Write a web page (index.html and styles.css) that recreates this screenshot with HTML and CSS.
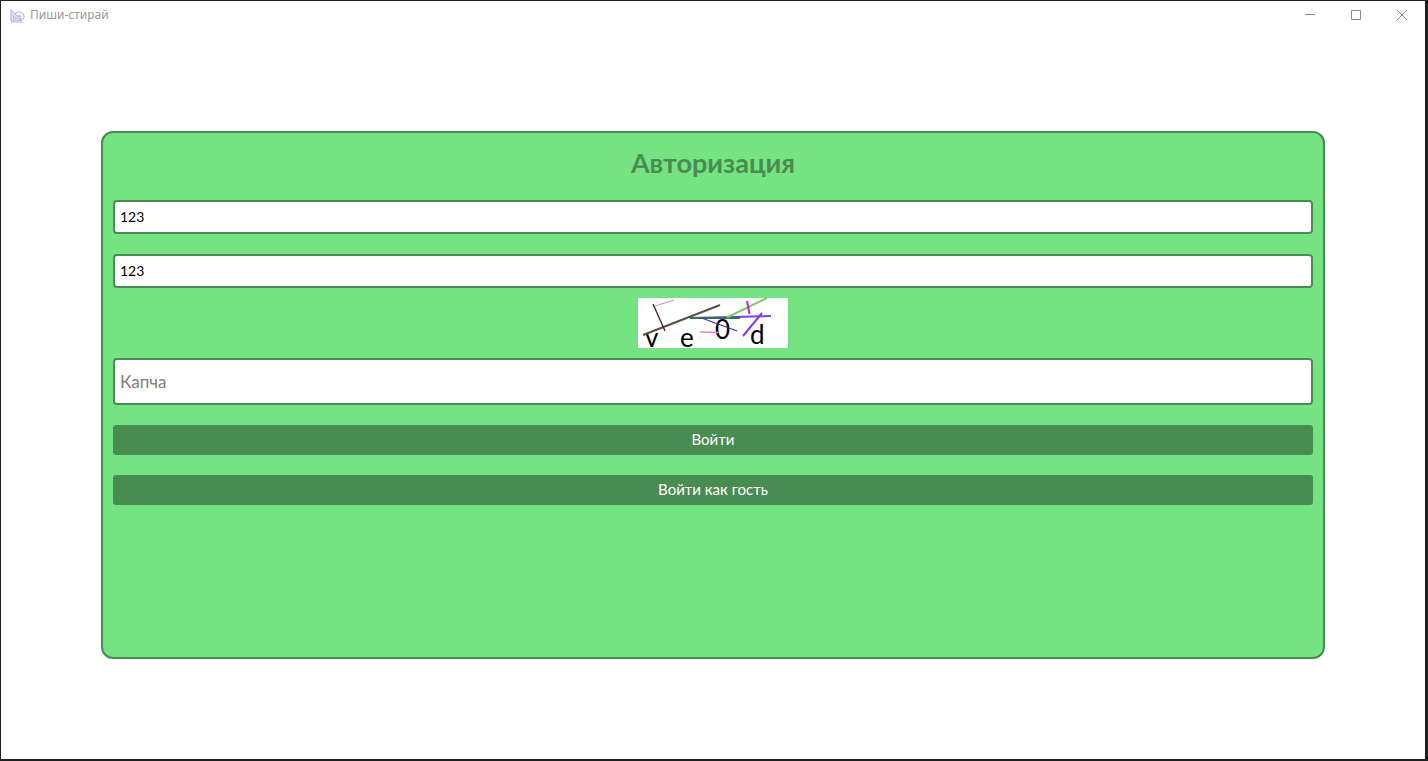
FILE: index.html
```
<!DOCTYPE html>
<html lang="ru">
<head>
<meta charset="utf-8">
<title>Пиши-стирай</title>
<link rel="stylesheet" href="styles.css">
</head>
<body>
<div class="window">
  <header class="titlebar">
    <svg class="app-icon" width="16" height="16" viewBox="0 0 16 16" fill="none" stroke="#a9a7d2" aria-hidden="true">
      <path d="M2 1.500v11.500h11z" fill="#e4e3f3"/>
      <path d="M4.500 7.500v3.500h3z" fill="#fff" stroke-width=".8"/>
      <path d="M6 6.500a4.500 4.500 0 0 1 8.500 4.500h-5" />
      <path d="M8.500 8a2 2 0 0 1 3.500 1z" stroke-width=".8"/>
      <path d="M2 14.500h12" stroke="#d5d4e8"/>
    </svg>
    <span class="app-name">Пиши-стирай</span>
    <div class="controls">
      <button class="control" type="button" aria-label="Свернуть"><svg width="10" height="10" viewBox="0 0 10 10"><path d="M0 4.500h10"/></svg></button>
      <button class="control" type="button" aria-label="Развернуть"><svg width="10" height="10" viewBox="0 0 10 10"><path d="M.5.5h9v9h-9z"/></svg></button>
      <button class="control" type="button" aria-label="Закрыть"><svg width="10" height="10" viewBox="0 0 10 10"><path d="M0 0l10 10M10 0L0 10"/></svg></button>
    </div>
  </header>
  <main class="content">
    <form class="card">
      <h1 class="heading">Авторизация</h1>
      <input class="field" type="text" aria-label="Логин" value="123">
      <input class="field" type="text" aria-label="Пароль" value="123">
      <svg class="captcha" width="150" height="50" viewBox="0 0 150 50" fill="none" role="img" aria-label="Изображение капчи">
        <rect width="150" height="50" fill="#fff"/>
        <g class="captcha-text">
          <text x="7" y="49">v</text>
          <text x="42" y="49">e</text>
          <text x="77" y="41">0</text>
          <text x="112" y="46">d</text>
        </g>
        <path d="M5 37L82 7" stroke="#5c4f45" stroke-width="2"/>
        <path d="M15 6l12 27" stroke="#3a1c2c" stroke-width="1.300"/>
        <path d="M17 8l19-6" stroke="#d98aa0"/>
        <path d="M52 20l81-2" stroke="#7b3fe4" stroke-width="2"/>
        <path d="M52 20h50" stroke="#35705c" stroke-width="2"/>
        <path d="M65 20.500l34 12.500" stroke="#3333bb" stroke-width="1.200"/>
        <path d="M62 34l18 .5" stroke="#ee82cf" stroke-width="1.500"/>
        <path d="M89 19.500L129 0" stroke="#7ccb64" stroke-width="2"/>
        <path d="M109 3l2.500 13" stroke="#c81edc" stroke-width="2"/>
        <path d="M124 15l-19 23" stroke="#7b3fe4" stroke-width="2"/>
      </svg>
      <input class="field field-tall" type="text" aria-label="Капча" placeholder="Капча">
      <button class="action" type="submit">Войти</button>
      <button class="action" type="button">Войти как гость</button>
    </form>
  </main>
</div>
</body>
</html>
```
FILE: styles.css
```
* {
  box-sizing: border-box;
}

body {
  margin: 0;
  min-height: 100vh;
  display: flex;
  padding: 1px 3px 2px 1px;
  background: #1e1e1e;
  font-family: "Comic Sans MS", Lato, sans-serif;
}

.window {
  flex: 1;
  display: flex;
  flex-direction: column;
  background: #fff;
}

.titlebar {
  display: flex;
  align-items: center;
  height: 30px;
  padding-left: 8px;
  font-family: "Noto Sans", sans-serif;
  font-size: 12px;
  line-height: 16px;
  color: #999;
}

.app-name {
  margin-left: 5px;
  padding-bottom: 2px;
}

.controls {
  display: flex;
  align-self: stretch;
  margin-left: auto;
}

.control {
  width: 46px;
  padding: 0 0 2px;
  border: 0;
  background: transparent;
}

.control svg {
  display: block;
  margin: 0 auto;
  fill: none;
  stroke: #888;
}

.content {
  flex: 1;
  display: flex;
  padding: 100px;
}

.card {
  flex: 1;
  display: flex;
  flex-direction: column;
  padding: 10px;
  border: 2px solid #498c51;
  border-radius: 12px;
  background: #76e383;
}

.heading {
  margin: 0;
  line-height: 40px;
  padding-bottom: 7px;
  text-align: center;
  font-size: 27px;
  font-weight: 700;
  color: #498c51;
}

.field {
  width: 100%;
  height: 34px;
  margin: 10px 0;
  padding: 0 5px 2px;
  border: 2px solid #498c51;
  border-radius: 4px;
  background: #fff;
  color: #000;
  font-family: inherit;
  font-size: 14px;
  outline: none;
}

.field-tall {
  height: 47px;
  padding-bottom: 0;
  font-size: 17px;
}

.field::placeholder {
  color: #808080;
  opacity: 1;
}

.captcha {
  align-self: center;
  overflow: visible;
}

.captcha-text {
  fill: #000;
  font-size: 26px;
}

.action {
  height: 30px;
  margin: 10px 0;
  padding: 0 0 2px;
  border: 0;
  border-radius: 3px;
  background: #498c51;
  color: #fff;
  font-family: inherit;
  font-size: 15px;
}
```
